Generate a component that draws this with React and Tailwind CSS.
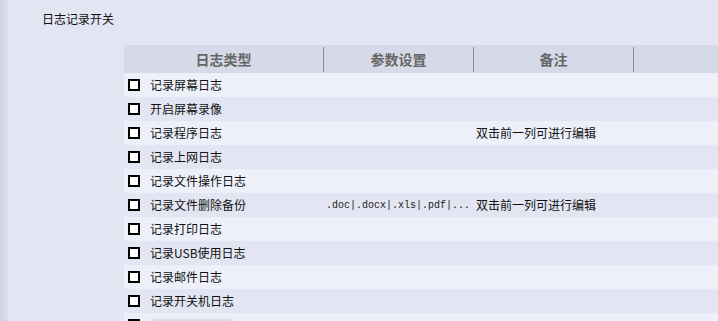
import React from "react";

const rows = [
  { name: "记录屏幕日志" },
  { name: "开启屏幕录像" },
  { name: "记录程序日志", note: "双击前一列可进行编辑" },
  { name: "记录上网日志" },
  { name: "记录文件操作日志" },
  { name: "记录文件删除备份", param: ".doc|.docx|.xls|.pdf|...", note: "双击前一列可进行编辑" },
  { name: "记录打印日志" },
  { name: "记录USB使用日志" },
  { name: "记录邮件日志" },
  { name: "记录开关机日志" },
  { name: "", blur: true },
];

const font = { fontFamily: '"Noto Sans CJK SC", "Noto Sans", sans-serif' };

export default function App() {
  return (
    <div className="w-[718px] h-[321px] overflow-hidden bg-[#e3e6f2] flex" style={font}>
      <div className="w-[8px] shrink-0 bg-gradient-to-r from-[#cfd3e2] to-[#dadeeb]" />
      <div className="flex-1 flex flex-col">
        <div className="h-[45px] shrink-0 pl-[34px] pt-[11px] text-[12px] leading-[16px] text-[#111]">日志记录开关</div>
        <div className="ml-[116px] flex flex-col shrink-0">
          <div className="h-[28px] shrink-0 bg-[#d6d9e7] flex items-center text-[14px] font-bold text-[#666]">
            <div className="w-[199px] text-center">日志类型</div>
            <div className="w-[1px] h-[25px] bg-[#8c8f9b]" />
            <div className="w-[149px] text-center">参数设置</div>
            <div className="w-[1px] h-[25px] bg-[#8c8f9b]" />
            <div className="w-[159px] text-center">备注</div>
            <div className="w-[1px] h-[25px] bg-[#8c8f9b]" />
            <div className="flex-1" />
          </div>
          {rows.map((r, i) => (
            <div
              key={i}
              className={`h-[24px] shrink-0 flex items-center text-[12px] text-[#111] ${i % 2 === 0 ? "bg-[#eef0f9]" : "bg-[#e3e6f2]"}`}
            >
              <div className="w-[200px] flex items-center pl-[4px]">
                <div className="w-[12px] h-[12px] border-2 border-black bg-white" />
                {r.blur ? (
                  <div className="ml-[12px] w-[80px] h-[10px] bg-[#c9ccd6] blur-[2px]" />
                ) : (
                  <span className="ml-[10px]">{r.name}</span>
                )}
              </div>
              <div className="w-[150px] pl-[2px] text-[10px] text-[#222]" style={{ fontFamily: '"Liberation Mono", monospace' }}>
                {r.param || ""}
              </div>
              <div className="w-[160px] pl-[2px]">{r.note || ""}</div>
            </div>
          ))}
        </div>
      </div>
    </div>
  );
}
